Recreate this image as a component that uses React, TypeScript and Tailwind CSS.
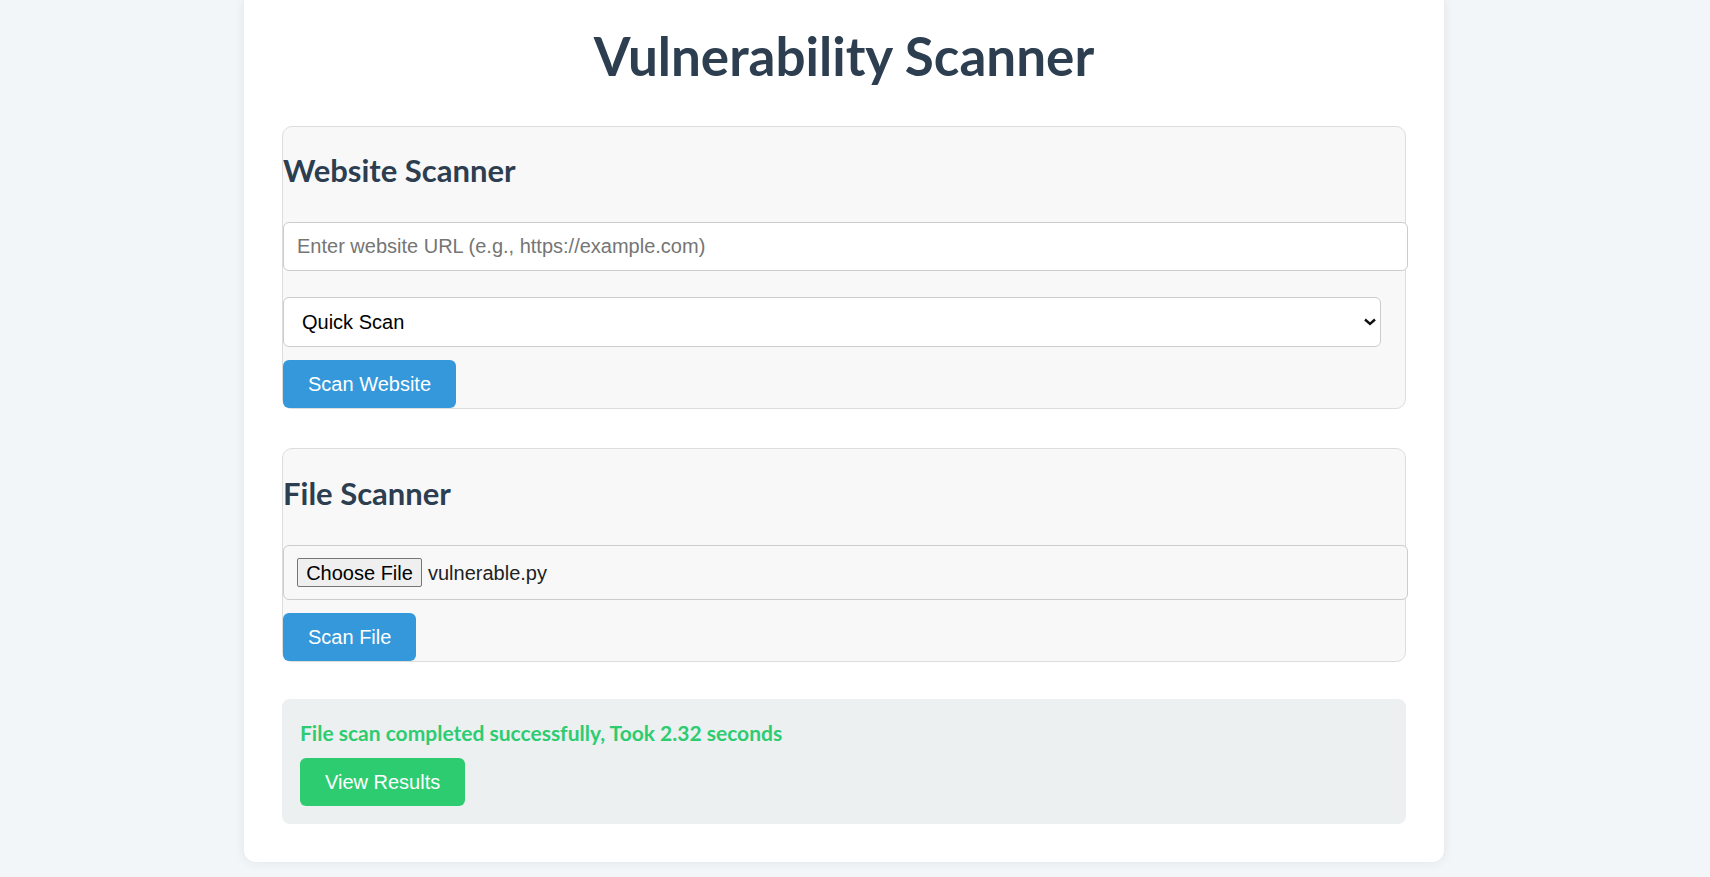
import React from 'react';

// ── Section box ──────────────────────────────────────────────────────────────

function ScannerBox({
  title,
  headingGap,
  children,
}: {
  title: string;
  headingGap: string;
  children: React.ReactNode;
}) {
  return (
    <div className="rounded-[10px] border border-[#dddddd] bg-[#f8f8f8]">
      <h2
        className={`${headingGap} text-[31px] leading-[31px] font-bold text-[#2c3e50] font-['Lato',sans-serif]`}
      >
        {title}
      </h2>
      <div className="mt-[36px] flex flex-col items-start">{children}</div>
    </div>
  );
}

function ActionButton({ label, color }: { label: string; color: 'blue' | 'green' }) {
  return (
    <button
      type="button"
      className={`h-[48px] rounded-[6px] px-[25px] text-[20px] text-white font-['Liberation_Sans',Arial,sans-serif] ${
        color === 'blue' ? 'bg-[#3498db]' : 'bg-[#2ecc71]'
      }`}
    >
      {label}
    </button>
  );
}

export default function App() {
  return (
    <div className="min-h-screen bg-[#f3f6f9] pb-[15px] font-['Liberation_Sans',Arial,sans-serif]">
      <div className="ml-[244px] w-[1200px] rounded-b-[12px] bg-white px-[38px] pb-[38px] shadow-[0_0_12px_rgba(0,0,0,0.08)]">
        <h1 className="pt-[29px] text-center text-[53px] leading-[53px] font-bold text-[#2c3e50] font-['Lato',sans-serif]">
          Vulnerability Scanner
        </h1>

        <div className="mt-[44px]">
          <ScannerBox title="Website Scanner" headingGap="mt-[28px]">
            <input
              type="text"
              placeholder="Enter website URL (e.g., https://example.com)"
              className="h-[49px] w-[1125px] rounded-[6px] border border-[#cccccc] bg-white pl-[13px] text-[20px] placeholder:text-[#757575] outline-none"
            />
            <div className="relative mt-[26px] h-[50px] w-[1098px]">
              <select className="h-[50px] w-full appearance-none rounded-[6px] border border-[#cccccc] bg-white pl-[18px] text-[20px] text-black outline-none">
                <option>Quick Scan</option>
                <option>Full Scan</option>
              </select>
              <svg
                className="pointer-events-none absolute right-[5px] top-[21px]"
                width="12"
                height="8"
                viewBox="0 0 12 8"
              >
                <path d="M1 1.5 L6 6 L11 1.5" fill="none" stroke="#111" strokeWidth="2.4" />
              </svg>
            </div>
            <div className="mt-[13px]">
              <ActionButton label="Scan Website" color="blue" />
            </div>
          </ScannerBox>
        </div>

        <div className="mt-[39px]">
          <ScannerBox title="File Scanner" headingGap="mt-[29px]">
            <div className="flex h-[55px] w-[1125px] items-center rounded-[6px] border border-[#cccccc] bg-[#f8f8f8] pl-[13px]">
              <span className="flex h-[29px] w-[125px] items-center justify-center rounded-[2px] border border-[#767676] bg-[#efefef] text-[20px] text-black">
                Choose File
              </span>
              <span className="ml-[6px] text-[20px] text-[#222222]">vulnerable.py</span>
            </div>
            <div className="mt-[13px]">
              <ActionButton label="Scan File" color="blue" />
            </div>
          </ScannerBox>
        </div>

        <div className="mt-[37px] rounded-[8px] bg-[#ecf0f1] pl-[18px] pt-[23px] pb-[18px]">
          <p className="text-[21px] leading-[21px] font-bold text-[#2ecc71] font-['Lato',sans-serif]">
            File scan completed successfully, Took 2.32 seconds
          </p>
          <div className="mt-[15px]">
            <ActionButton label="View Results" color="green" />
          </div>
        </div>
      </div>
    </div>
  );
}
